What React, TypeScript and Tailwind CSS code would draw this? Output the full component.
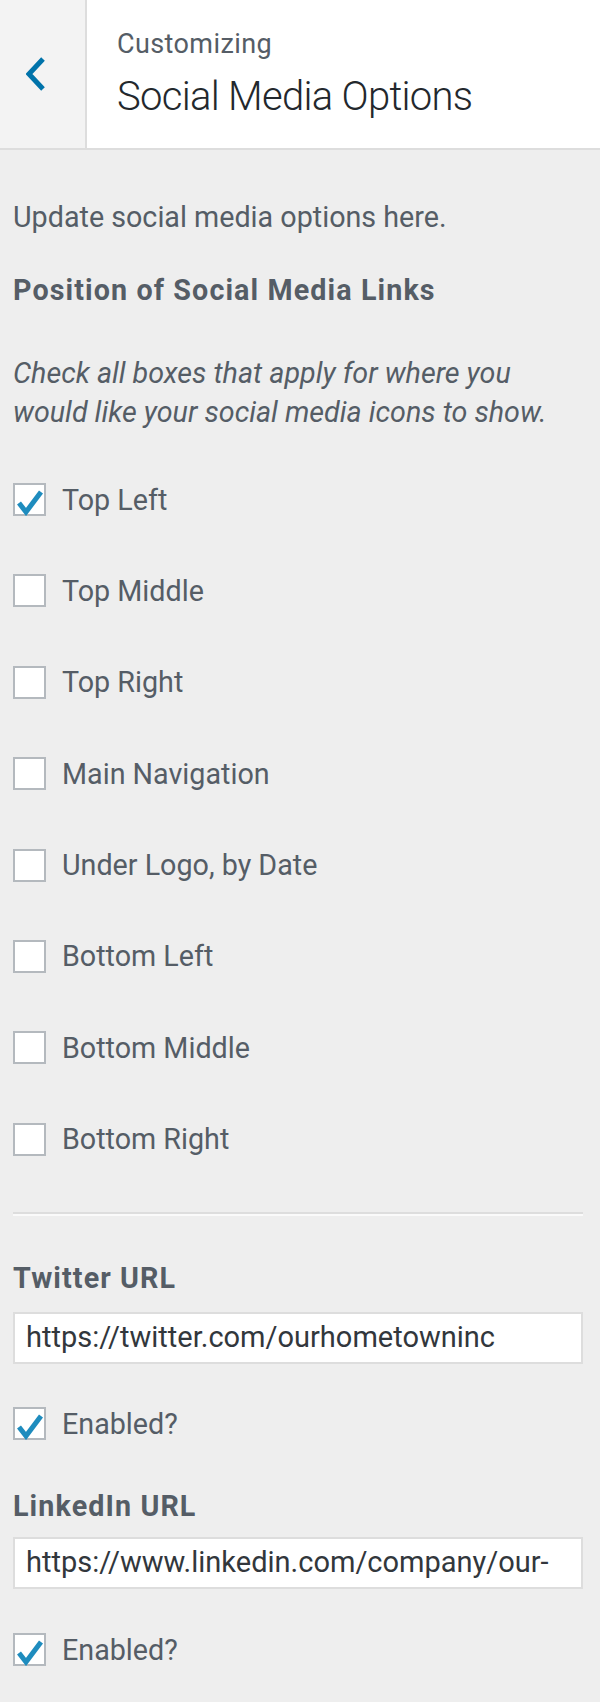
import React from 'react';

const positions = [
  { label: 'Top Left', checked: true },
  { label: 'Top Middle', checked: false },
  { label: 'Top Right', checked: false },
  { label: 'Main Navigation', checked: false },
  { label: 'Under Logo, by Date', checked: false },
  { label: 'Bottom Left', checked: false },
  { label: 'Bottom Middle', checked: false },
  { label: 'Bottom Right', checked: false },
];

const Checkbox = ({ checked }: { checked: boolean }) => (
  <span className="w-[33px] h-[33px] shrink-0 bg-white border-2 border-[#b4b9be] flex items-center justify-center">
    {checked && (
      <svg width="33" height="33" viewBox="0 0 33 33" className="-m-[2px]">
        <path d="M6 20 L13 29 L28 9" fill="none" stroke="#1e8cbe" strokeWidth="5" strokeLinejoin="miter" />
      </svg>
    )}
  </span>
);

const CheckRow = ({ label, checked }: { label: string; checked: boolean }) => (
  <label className="flex items-center gap-[16px] text-[28.7px] leading-[40px] text-[#555d66]">
    <Checkbox checked={checked} />
    <span>{label}</span>
  </label>
);

const UrlField = ({ value }: { value: string }) => (
  <div className="h-[52px] bg-white border-2 border-[#dddddd] pl-[11px] flex items-center text-[29px] text-[#32373c] overflow-hidden whitespace-nowrap">
    {value}
  </div>
);

export default function App() {
  return (
    <div className="w-[600px] min-h-[1702px] bg-[#eeeeee] font-['Roboto',sans-serif]">
      {/* header */}
      <div className="flex h-[150px] bg-white border-b-2 border-[#dddddd]">
        <div className="w-[87px] shrink-0 bg-[#f3f3f3] border-r-2 border-[#dddddd] flex items-center pl-[26px]">
          <svg width="20" height="34" viewBox="0 0 20 34">
            <path d="M17 2 L3 17 L17 32" fill="none" stroke="#0073aa" strokeWidth="5" />
          </svg>
        </div>
        <div className="pl-[30px] pt-[28px]">
          <div className="text-[27px] leading-[32px] tracking-[0.4px] text-[#555d66]">Customizing</div>
          <div className="mt-[13px] text-[40px] leading-[48px] tracking-[-0.7px] font-light text-[#23282d]">Social Media Options</div>
        </div>
      </div>

      {/* body */}
      <div className="pl-[13px] pr-[17px] pt-[47px]">
        <p className="text-[28.7px] leading-[40px] text-[#555d66]">Update social media options here.</p>
        <h3 className="mt-[33px] text-[28.7px] leading-[40px] tracking-[1.1px] font-bold text-[#555d66]">Position of Social Media Links</h3>
        <p className="mt-[44px] text-[28.7px] leading-[39px] italic text-[#555d66]">
          Check all boxes that apply for where you would like your social media icons to show.
        </p>
        <div className="mt-[47.5px] flex flex-col gap-[51.4px]">
          {positions.map((p) => (
            <CheckRow key={p.label} label={p.label} checked={p.checked} />
          ))}
        </div>

        <div className="mt-[53px] border-t-2 border-[#dddddd] border-b-2 border-b-[#fafafa]" />

        <h3 className="mt-[42px] text-[28.7px] leading-[40px] tracking-[1.1px] font-bold text-[#555d66]">Twitter URL</h3>
        <div className="mt-[14px]">
          <UrlField value="https://twitter.com/ourhometowninc" />
        </div>
        <div className="mt-[39.5px]">
          <CheckRow label="Enabled?" checked />
        </div>

        <h3 className="mt-[42.5px] text-[28.7px] leading-[40px] tracking-[1.1px] font-bold text-[#555d66]">LinkedIn URL</h3>
        <div className="mt-[11px]">
          <UrlField value="https://www.linkedin.com/company/our-" />
        </div>
        <div className="mt-[40.5px]">
          <CheckRow label="Enabled?" checked />
        </div>
      </div>
    </div>
  );
}
